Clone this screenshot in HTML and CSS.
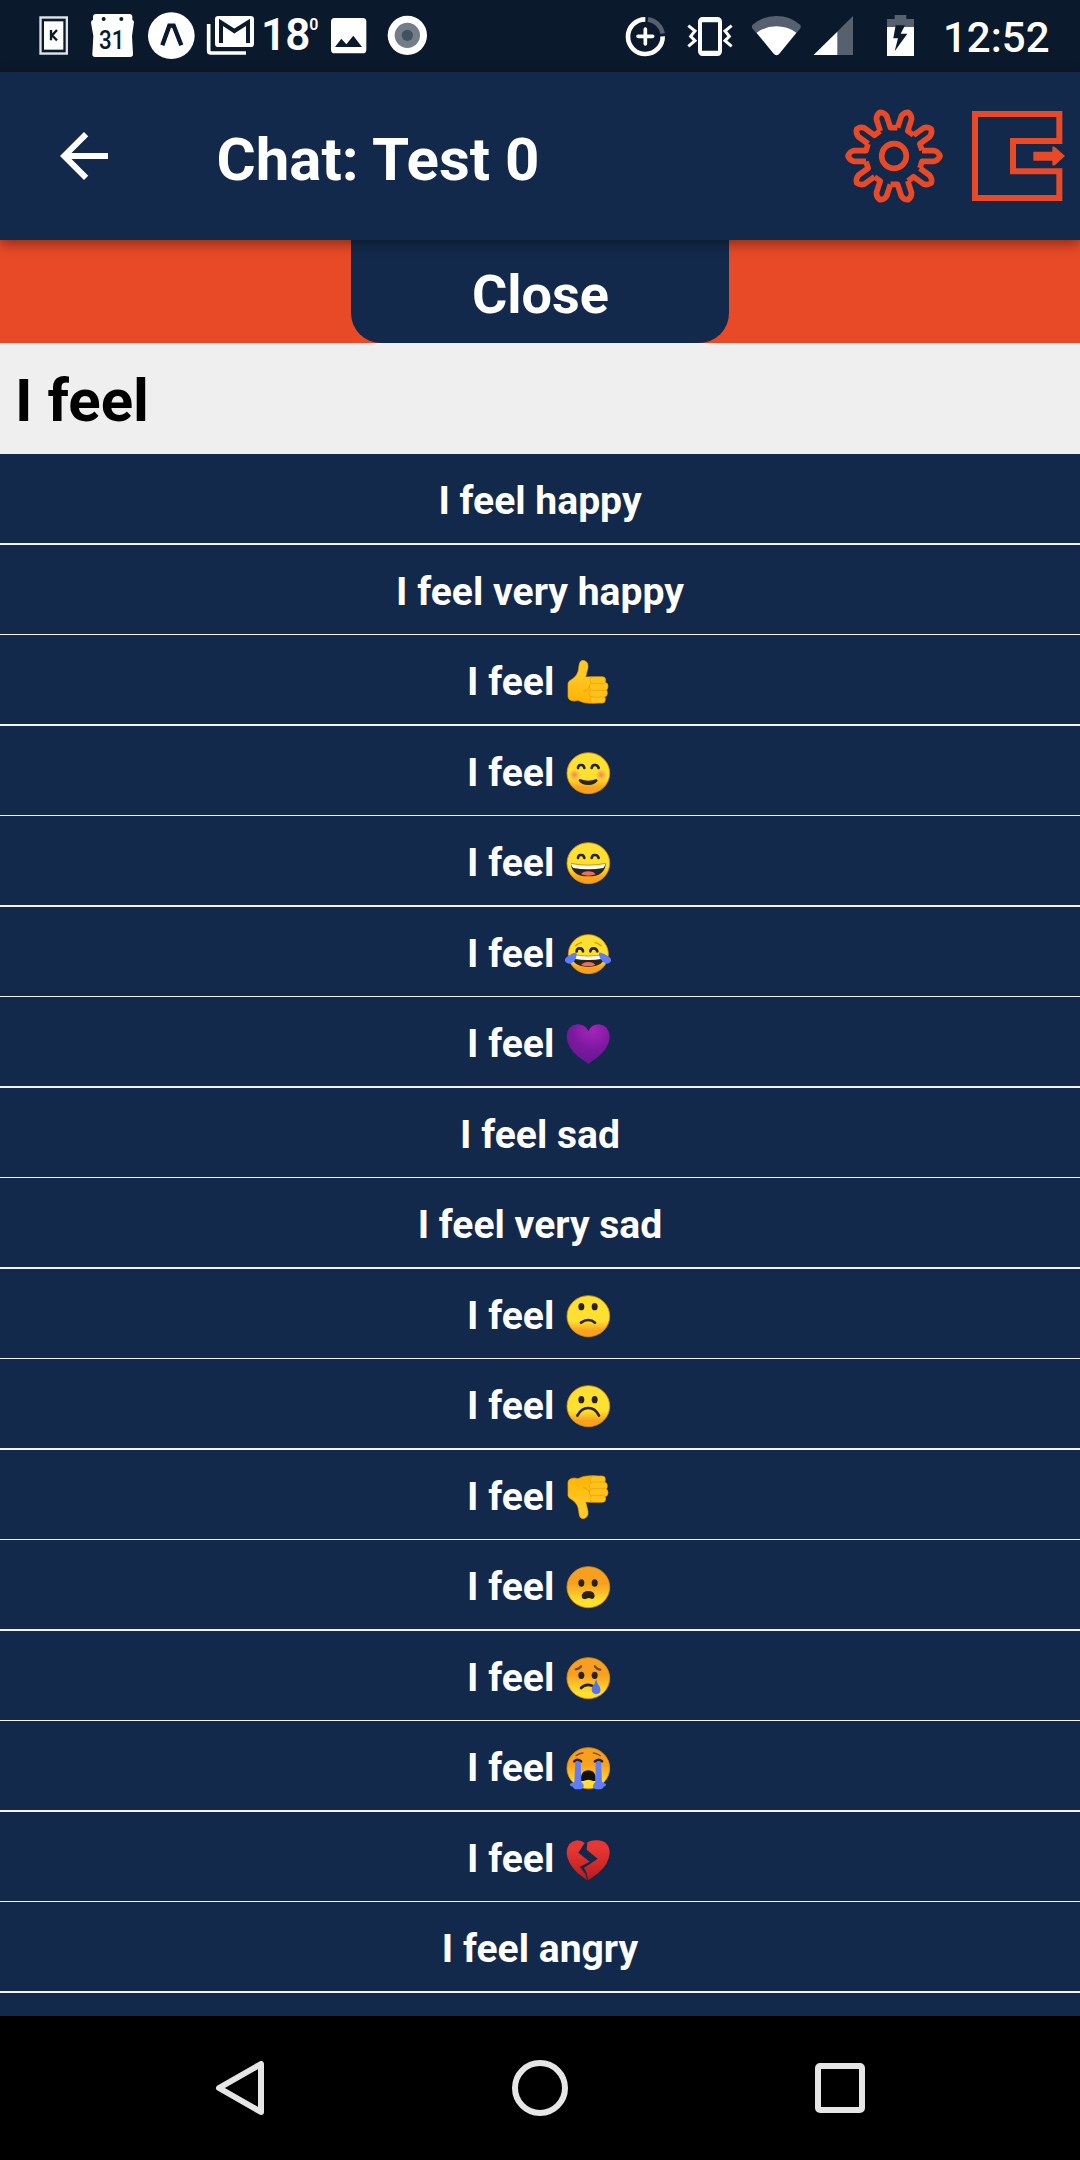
FILE: index.html
```html
<!DOCTYPE html>
<html lang="en">
<head>
<meta charset="utf-8">
<title>Chat: Test 0</title>
<link rel="stylesheet" href="styles.css">
</head>
<body>
<svg class="defs" width="0" height="0" aria-hidden="true">
  <defs>
    <linearGradient id="face" x1="0" y1="0" x2="0" y2="1"><stop offset=".62" stop-color="#fde030"/><stop offset=".86" stop-color="#f7a11f"/></linearGradient>
    <linearGradient id="gloom" x1="0" y1="0" x2="0" y2="1"><stop offset=".42" stop-color="#f7a020"/><stop offset=".85" stop-color="#fde030"/></linearGradient>
    <radialGradient id="blush"><stop offset="0" stop-color="#f0785a" stop-opacity=".85"/><stop offset="1" stop-color="#f0785a" stop-opacity="0"/></radialGradient>
    <radialGradient id="purple" cx=".6" cy=".15" r=".8"><stop offset="0" stop-color="#a824bb"/><stop offset=".6" stop-color="#7b19a0"/><stop offset="1" stop-color="#6c1796"/></radialGradient>
    <linearGradient id="red" x1="0" y1="0" x2="0" y2="1"><stop offset=".2" stop-color="#e73733"/><stop offset="1" stop-color="#b81c1e"/></linearGradient>
    <linearGradient id="hand" x1="0" y1="0" x2="0" y2="1"><stop offset=".3" stop-color="#ffca28"/><stop offset="1" stop-color="#ffb300"/></linearGradient>
    <path id="tooth" d="M84-16L121-16Q134-12 138 0Q134 12 121 16L84 16L78 36"/>
    <g id="grin">
      <path d="M24 74Q76 92 128 74Q126 112 76 112Q26 112 24 74Z" fill="#262320"/>
      <path d="M24 74Q76 84 127 74Q126 82 121 87Q76 95 31 87Q25 82 24 74Z" fill="#fff"/>
      <path d="M54 106Q60 97 76 97Q92 97 98 106Q76 114 54 106Z" fill="#ee6d62"/>
      <path d="M24 73Q76 84 128 73" fill="none" stroke="#eb8f00" stroke-width="3"/>
    </g>
    <g id="closed-eyes" fill="none" stroke="#262320" stroke-width="8" stroke-linecap="round"><path d="M45 57Q46 47 54 48Q62 47 64 57M86 57Q88 47 95 48Q104 47 107 57"/></g>
    <g id="open-eyes" fill="#2a2218"><ellipse cx="55" cy="44" rx="9" ry="11"/><ellipse cx="95" cy="44" rx="9" ry="11"/></g>
    <g id="fist">
      <path d="M54 9Q59 5 67 9Q77 14 75 29L68 57L88 56V127H120Q110 136 85 136Q60 136 45 127L34 129Q16 128 15 116V76Q16 69 27 64Q45 52 47 31Q48 13 54 9Z" fill="url(#hand)" stroke="#eaa400" stroke-width="2"/>
      <g fill="#ffc21c" stroke="#e8a000" stroke-width="2"><rect x="81" y="113" width="46" height="22" rx="10"/><rect x="79" y="93" width="54" height="24" rx="11"/><rect x="79" y="73" width="56" height="24" rx="11"/><rect x="81" y="56" width="47" height="21" rx="10"/></g>
      <path d="M61 100Q75 99 80 84" fill="none" stroke="#e8a000" stroke-width="3"/>
    </g>
  </defs>
</svg>
<div class="screen">
  <div class="status">
    <svg width="80" height="72" viewBox="0 0 240 216"><path d="M118 49H204V164H118Z" fill="#dfe3e8"/><path d="M125 56H197V157H125Z" fill="#0a192b"/><path d="M132 64H190V149H132Z" fill="#fff"/><path d="M153 90V121M171 90L156 106L171 121" fill="none" stroke="#0a192b" stroke-width="7"/></svg>
    <svg width="60" height="72" viewBox="240 0 180 216"><path fill="#fff" d="M288 42H388Q397 42 397 51V60Q402 61 402 67L396 108L399 163Q399 171 390 171H285Q277 171 277 163L280 108L273 68Q273 61 279 60V51Q279 42 288 42Z"/><circle cx="311" cy="57" r="6" fill="#0a192b"/><circle cx="364" cy="57" r="6" fill="#0a192b"/><text class="cal" x="335" y="146" textLength="76" lengthAdjust="spacingAndGlyphs">31</text></svg>
    <svg width="60" height="72" viewBox="420 0 180 216"><circle cx="514" cy="107" r="70" fill="#fff"/><path d="M487 136L508 77H521L544 136" fill="none" stroke="#0a192b" stroke-width="13"/></svg>
    <svg width="60" height="72" viewBox="600 0 180 216"><path d="M626 72V153Q626 159 632 159H738" fill="none" stroke="#fff" stroke-width="11"/><rect x="645" y="48" width="117" height="93" rx="10" fill="#fff"/><path d="M663 129V67L703 93L744 67V129" fill="none" stroke="#0a192b" stroke-width="12"/></svg>
    <span class="temp">18<span class="degree">0</span></span>
    <svg width="55" height="72" viewBox="975 0 165 216"><rect x="993" y="54" width="106" height="106" rx="11" fill="#fff"/><path d="M1005 141L1024 116L1039 133L1060 107L1086 141Z" fill="#0a192b"/></svg>
    <svg width="60" height="72" viewBox="1140 0 180 216"><circle cx="1222" cy="106" r="59" fill="#fff"/><circle cx="1222" cy="106" r="38" fill="#747e8b"/><circle cx="1222" cy="106" r="17" fill="#46515f"/></svg>
    <span class="spacer"></span>
    <svg width="77" height="72" viewBox="0 0 231 216" fill="none"><path d="M136 58A52 52 0 1 0 188 109" stroke="#fff" stroke-width="14"/><path d="M144 58A52 52 0 0 1 188 101" stroke="#56606e" stroke-width="14"/><path d="M136 87V132M114 109H158" stroke="#fff" stroke-width="11" stroke-linecap="round"/></svg>
    <svg width="63" height="72" viewBox="231 0 189 216" fill="none" stroke="#fff"><rect x="300" y="57" width="60" height="105" rx="8" stroke-width="12"/><path d="M302 60H358M302 159H358" stroke-width="14"/><path d="M265 77L285 93L272 109L285 122L265 139M395 77L375 93L388 109L375 122L395 139" stroke-width="9"/></svg>
    <svg width="67" height="72" viewBox="420 0 201 216"><path d="M530 166Q525 166 520 160L456 84V76Q486 48 529 48Q572 48 602 76V84L539 160Q535 166 530 166Z" fill="#56606e"/><path d="M530 166Q525 166 520 160L470 98Q496 79 529 79Q562 79 589 98L539 160Q535 166 530 166Z" fill="#fff"/></svg>
    <svg width="60" height="72" viewBox="621 0 180 216"><path d="M759 48V165H641Z" fill="#56606e"/><path d="M712 95V165H641Z" fill="#fff"/></svg>
    <svg width="67" height="72" viewBox="801 0 201 216"><path d="M884 45H919V57H942V82H861V57H884Z" fill="#56606e"/><path d="M861 81H942V168H861Z" fill="#fff"/><path d="M887 76H915L902 101H922L884 154L894 115H880Z" fill="#0a192b"/></svg>
    <span class="clock">12:52</span>
  </div>
  <header class="header">
    <svg class="back" width="72" height="72" viewBox="0 0 24 24"><path fill="#fff" d="M20 11H7.83l5.59-5.59L12 4l-8 8 8 8 1.41-1.41L7.83 13H20v-2z"/></svg>
    <h1 class="title">Chat: Test 0</h1>
    <svg width="110" height="168" viewBox="60 -24 330 504"><g transform="translate(222 228)" fill="none" stroke="#e84a27" stroke-width="17" stroke-linejoin="round"><circle r="37"/><use href="#tooth"/><use href="#tooth" transform="rotate(36)"/><use href="#tooth" transform="rotate(72)"/><use href="#tooth" transform="rotate(108)"/><use href="#tooth" transform="rotate(144)"/><use href="#tooth" transform="rotate(180)"/><use href="#tooth" transform="rotate(216)"/><use href="#tooth" transform="rotate(252)"/><use href="#tooth" transform="rotate(288)"/><use href="#tooth" transform="rotate(324)"/></g></svg>
    <svg width="130" height="168" viewBox="390 -24 390 504"><path d="M718 183V102H465V354H718V274H579V183H718Z" fill="none" stroke="#e84a27" stroke-width="18"/><path d="M640 215H697V200Q703 198 708 204L735 228L708 253Q703 258 697 256V242H640Z" fill="#e84a27"/></svg>
  </header>
  <div class="drawer"><button class="close">Close</button></div>
  <h2 class="prompt">I feel</h2>
  <ul class="list">
    <li>I feel happy</li>
    <li>I feel very happy</li>
    <li>I feel <svg class="emoji" viewBox="0 0 150 150"><use href="#fist"/></svg></li>
    <li>I feel <svg class="emoji" viewBox="0 0 150 150"><ellipse class="face" cx="76" cy="72.5" rx="64" ry="61.5"/><circle cx="35" cy="78" r="17" fill="url(#blush)"/><circle cx="115" cy="78" r="17" fill="url(#blush)"/><use href="#closed-eyes"/><path d="M51 90Q76 100 100 90Q106 92 103 97Q95 108 76 108Q56 108 48 97Q45 91 51 90Z" fill="#262320"/></svg></li>
    <li>I feel <svg class="emoji" viewBox="0 0 150 150"><ellipse class="face" cx="76" cy="72.5" rx="64" ry="61.5"/><use href="#closed-eyes"/><use href="#grin"/></svg></li>
    <li>I feel <svg class="emoji" viewBox="0 0 150 150"><ellipse class="face" cx="76" cy="72.5" rx="60" ry="58.5"/><path d="M37 48Q45 40 57 37M95 37Q107 40 115 48" fill="none" stroke="#eb8f00" stroke-width="4"/><use href="#closed-eyes" transform="translate(-4 7)"/><use href="#grin" transform="translate(2 2) scale(.97)"/><path d="M39 67Q43 73 38 86Q32 100 18 101Q4 98 6 87Q13 76 39 67ZM109 67Q106 73 111 84Q120 100 133 101Q146 98 144 87Q137 76 109 67Z" fill="#5f7cf9"/></svg></li>
    <li>I feel <svg class="emoji" viewBox="0 0 150 150"><path d="M76 34Q68 13 43 13Q11 17 11 51Q12 83 47 111L76 131L105 111Q139 83 140 51Q139 17 108 13Q84 13 76 34Z" fill="url(#purple)"/></svg></li>
    <li>I feel sad</li>
    <li>I feel very sad</li>
    <li>I feel <svg class="emoji" viewBox="0 0 150 150"><ellipse class="face" cx="76" cy="72.5" rx="64" ry="61.5"/><use href="#open-eyes"/><path d="M54 92Q65 84 76 84Q87 84 96 92" fill="none" stroke="#2a2218" stroke-width="8" stroke-linecap="round"/></svg></li>
    <li>I feel <svg class="emoji" viewBox="0 0 150 150"><ellipse class="face" cx="76" cy="72.5" rx="64" ry="61.5"/><use href="#open-eyes" transform="translate(0 9)"/><path d="M43 101Q55 78 76 78Q97 78 108 101" fill="none" stroke="#2a2218" stroke-width="8" stroke-linecap="round"/></svg></li>
    <li>I feel <svg class="emoji" viewBox="0 0 150 150"><use href="#fist" transform="translate(0 144) scale(1 -1)"/></svg></li>
    <li>I feel <svg class="emoji" viewBox="0 0 150 150"><ellipse class="face gloom" cx="76" cy="72.5" rx="64" ry="61.5"/><use href="#open-eyes" transform="translate(0 16)"/><path d="M58 106Q53 96 62 88Q76 80 90 88Q98 97 93 105Q87 110 82 106Q76 104 70 107Q62 110 58 106Z" fill="#2a2218"/></svg></li>
    <li>I feel <svg class="emoji" viewBox="0 0 150 150"><ellipse class="face gloom" cx="76" cy="72.5" rx="64" ry="61.5"/><path d="M38 46Q50 44 54 37M96 37Q102 46 112 47" fill="none" stroke="#7a4a34" stroke-width="7" stroke-linecap="round"/><use href="#open-eyes" transform="translate(0 20)"/><path d="M54 102Q67 88 88 95" fill="none" stroke="#2a2218" stroke-width="8" stroke-linecap="round"/><path d="M100 76Q101 87 110 98Q118 118 100 121Q82 119 87 100Q97 87 100 76Z" fill="#5573ec"/></svg></li>
    <li>I feel <svg class="emoji" viewBox="0 0 150 150"><ellipse class="face gloom" cx="76" cy="72.5" rx="64" ry="61.5"/><path d="M39 35Q48 27 60 27M91 27Q103 28 112 35" fill="none" stroke="#7a4a34" stroke-width="4" stroke-linecap="round"/><path d="M34 52Q43 43 54 52M96 52Q108 43 117 52" fill="none" stroke="#2a2218" stroke-width="8" stroke-linecap="round"/><path d="M54 111V98Q58 79 76 79Q94 79 98 98V111Z" fill="#111"/><path d="M54 116Q76 98 98 116Q89 127 76 130Q62 127 54 116Z" fill="#fde030"/><path d="M37 53Q45 50 53 55L55 114Q64 120 62 128Q58 137 44 136Q32 137 30 128Q19 128 21 119Q28 117 34 114ZM98 55Q106 50 114 53L117 114Q126 119 129 120Q130 127 122 128Q119 137 107 136Q93 137 90 128Q89 121 97 114Z" fill="#5f7cf9"/></svg></li>
    <li>I feel <svg class="emoji" viewBox="0 0 150 150"><path d="M65 24Q57 16 43 16Q12 19 11 54Q13 85 44 115L73 136L66 115L50 96L80 80L46 53Z" fill="url(#red)"/><path d="M73 22Q86 14 106 16Q139 19 140 54Q138 87 106 114L76 136L70 112L63 99L104 71L71 44Z" fill="url(#red)"/></svg></li>
    <li>I feel angry</li>
    <li></li>
  </ul>
  <nav class="nav">
    <svg width="60" height="60" viewBox="0 0 60 60"><path d="M51 6V54L9 30Z"/></svg>
    <svg width="60" height="60" viewBox="0 0 60 60"><circle cx="30" cy="30" r="25"/></svg>
    <svg width="60" height="60" viewBox="0 0 60 60"><rect x="8" y="8" width="44" height="44" rx="2"/></svg>
  </nav>
</div>
</body>
</html>
```
FILE: styles.css
```css
* { box-sizing: border-box; margin: 0; padding: 0; }
body { width: 1080px; height: 2160px; overflow: hidden; font-family: Roboto, "Noto Sans", sans-serif; background: #000; }
svg { display: block; flex: none; }
.defs { position: absolute; }
.screen { display: flex; flex-direction: column; width: 1080px; height: 2160px; }
.status { display: flex; flex: none; height: 72px; background: #0a192b; color: #fff; overflow: hidden; }
.temp { display: flex; flex: none; width: 65px; padding-left: 1px; font-size: 44px; font-weight: 600; line-height: 71px; letter-spacing: -1px; white-space: nowrap; }
.degree { font-size: 16px; line-height: 50px; letter-spacing: 0; }
.cal { font-size: 80px; font-weight: 500; fill: #0a192b; text-anchor: middle; }
.spacer { flex: none; width: 160px; }
.clock { flex: none; padding-left: 9px; font-size: 42px; font-weight: 500; line-height: 75px; white-space: nowrap; }
.header { position: relative; z-index: 1; display: flex; align-items: center; flex: none; height: 168px; background: #13294b; box-shadow: 0 4px 12px rgba(0, 0, 0, .4); }
.back { margin-left: 48px; }
.title { flex: 1; margin-left: 96.5px; padding-top: 8px; font-size: 60px; font-weight: 700; line-height: 72px; color: #fff; white-space: nowrap; }
.drawer { display: flex; justify-content: center; flex: none; height: 103px; background: #e84a27; }
.close { width: 378px; height: 103px; padding: 7px 0 0 1px; border: 0; border-radius: 0 0 30px 30px; background: #13294b; color: #fff; font: 700 54px/96px Roboto, sans-serif; }
.prompt { flex: none; height: 111px; padding: 5px 0 0 15px; background: #efefef; color: #000; font-size: 60px; font-weight: 700; line-height: 106px; }
.list { flex: 1; min-height: 0; overflow: hidden; list-style: none; background: #13294b; }
.list li { height: 90px; padding-top: 5px; border-bottom: 1px solid #f4f4f4; color: #fff; font-size: 39.1px; font-weight: 700; line-height: 85px; text-align: center; white-space: nowrap; }
.list li:nth-child(odd) { height: 91px; border-bottom-width: 2px; }
.emoji { display: inline-block; width: 50px; height: 50px; margin-left: -1px; vertical-align: -12.67px; }
.face { fill: url(#face); stroke: #eb8f00; stroke-width: 2.5px; }
.face.gloom { fill: url(#gloom); }
.nav { display: flex; justify-content: space-between; align-items: center; flex: none; height: 144px; padding: 0 210px; background: #000; }
.nav svg { fill: none; stroke: #e6e6e6; stroke-width: 6px; stroke-linejoin: round; }
```
